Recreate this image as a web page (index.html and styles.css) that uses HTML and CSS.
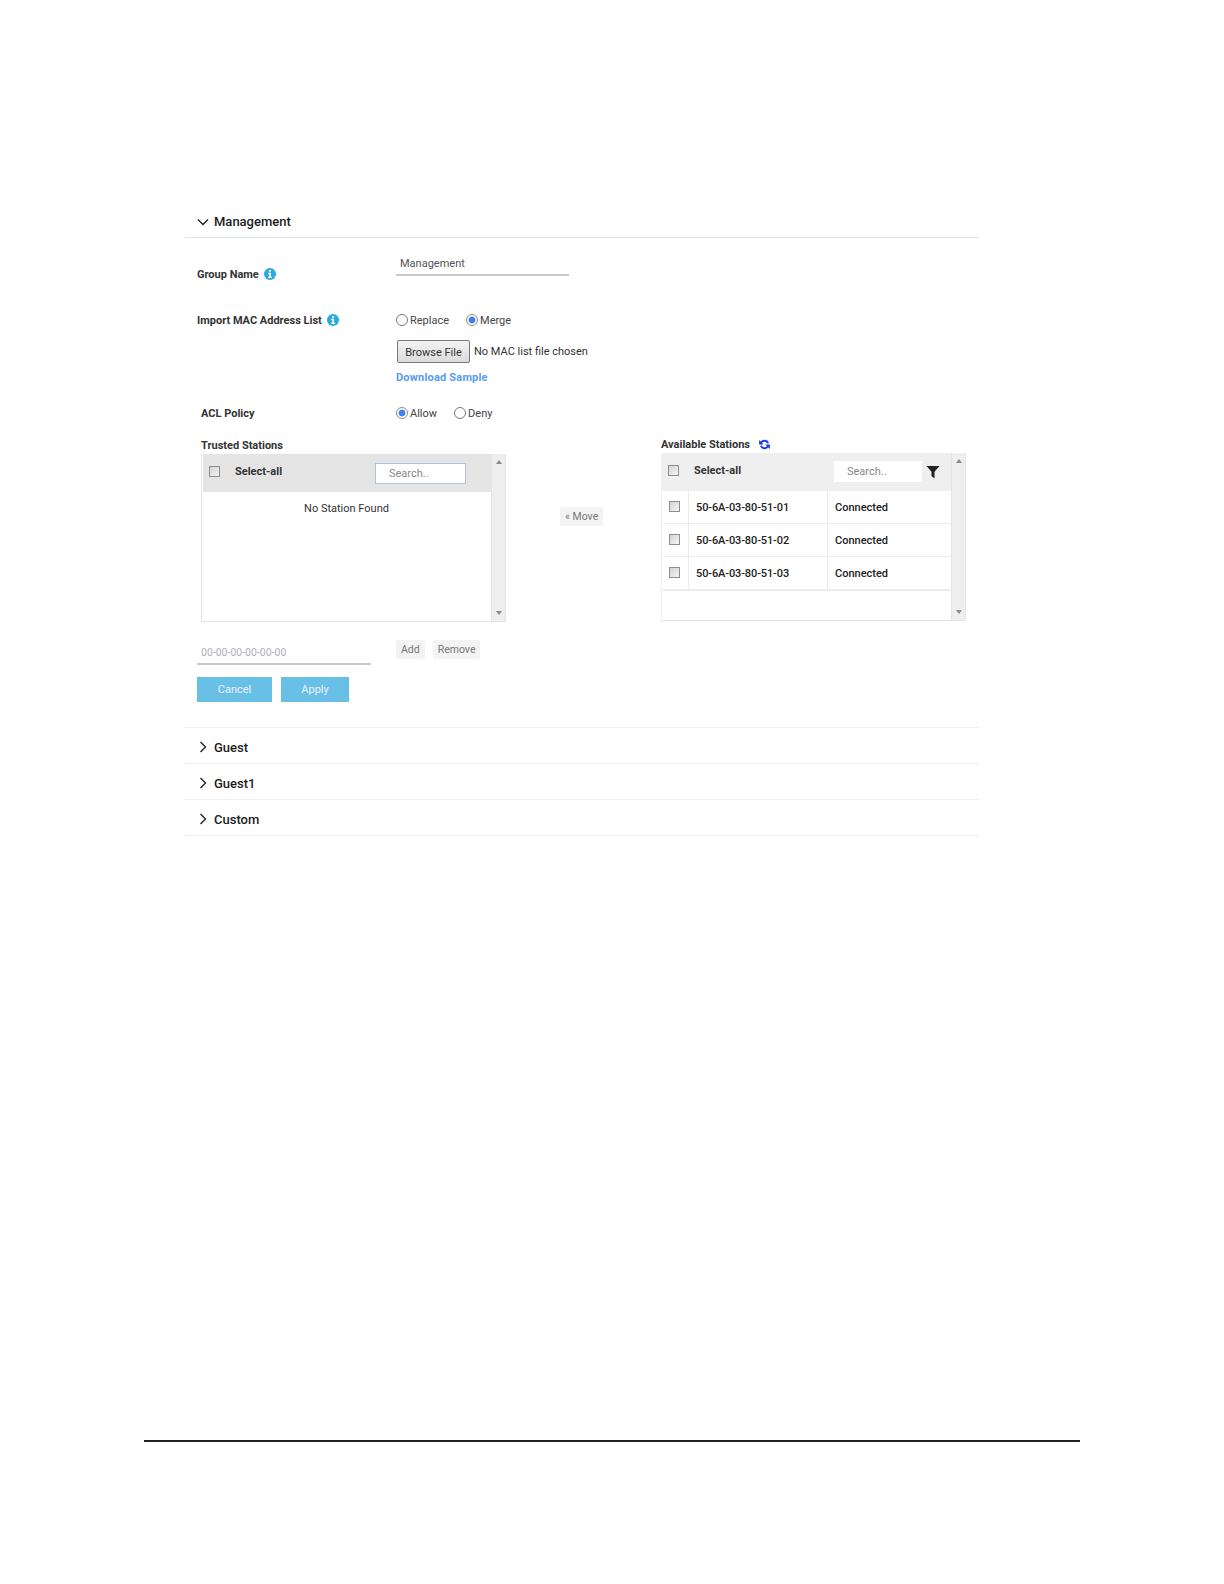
FILE: index.html
```html
<!DOCTYPE html>
<html lang="en">
<head>
<meta charset="utf-8">
<title>Management</title>
<link rel="stylesheet" href="styles.css">
</head>
<body>
<main class="page">
  <section class="accordion">
    <header class="acc-head acc-open">
      <svg class="chev" width="12" height="12" viewBox="0 0 12 12"><path d="M1 3.5 6 8.5 11 3.5" fill="none" stroke="#222" stroke-width="1.4"/></svg>
      <span>Management</span>
    </header>
    <div class="acc-body">
      <div class="row row-name">
        <div class="label">Group Name <svg class="info" width="12" height="12" viewBox="0 0 12 12"><circle cx="6" cy="6" r="6" fill="#29abe2"/><rect x="5" y="2" width="2" height="1.8" fill="#fff"/><path d="M4.2 4.8H7V8.8H8V10H4.2V8.8H5.2V6H4.2Z" fill="#fff"/></svg></div>
        <div class="text-field name-field">Management</div>
      </div>
      <div class="row row-import">
        <div class="label">Import MAC Address List <svg class="info" width="12" height="12" viewBox="0 0 12 12"><circle cx="6" cy="6" r="6" fill="#29abe2"/><rect x="5" y="2" width="2" height="1.8" fill="#fff"/><path d="M4.2 4.8H7V8.8H8V10H4.2V8.8H5.2V6H4.2Z" fill="#fff"/></svg></div>
        <div class="value-stack">
          <div class="radios">
            <span class="radio-item"><i class="radio"></i>Replace</span>
            <span class="radio-item"><i class="radio on"></i>Merge</span>
          </div>
          <div class="file-line">
            <button class="browse" type="button">Browse File</button>
            <span class="file-note">No MAC list file chosen</span>
          </div>
          <a class="sample">Download Sample</a>
        </div>
      </div>
      <div class="row row-acl">
        <div class="label label-acl">ACL Policy</div>
        <div class="radios radios-acl">
          <span class="radio-item"><i class="radio on"></i>Allow</span>
          <span class="radio-item"><i class="radio"></i>Deny</span>
        </div>
      </div>

      <div class="stations">
        <div class="panel">
          <div class="panel-title">Trusted Stations</div>
          <div class="box">
            <div class="box-main">
              <div class="box-head box-head-dark">
                <i class="check"></i>
                <span class="select-all">Select-all</span>
                <span class="search search-focus">Search..</span>
              </div>
              <div class="empty">No Station Found</div>
            </div>
            <div class="scroll"><i class="arrow up"></i><i class="arrow down"></i></div>
          </div>
        </div>
        <div class="move-col"><button class="ghost move" type="button">« Move</button></div>
        <div class="panel panel-right">
          <div class="panel-title">Available Stations
            <svg class="refresh" width="13" height="13" viewBox="0 0 24 24"><path d="M20.5 9.5A9 9 0 0 0 5 6.5L2 3.5V12H10.5L7.5 9A5.5 5.5 0 0 1 16.8 10.2ZM3.5 14.5A9 9 0 0 0 19 17.5L22 20.5V12H13.5L16.5 15A5.5 5.5 0 0 1 7.2 13.8Z" fill="#1a3fe0"/></svg>
          </div>
          <div class="box box-right">
            <div class="box-main">
              <div class="box-head box-head-light">
                <i class="check"></i>
                <span class="select-all">Select-all</span>
                <span class="search">Search..</span>
                <svg class="filter" width="14" height="14" viewBox="0 0 14 14"><path d="M0.5 1H13.5L8.5 6.8V13.5L5.5 11V6.8Z" fill="#222"/></svg>
              </div>
              <div class="st-row"><span class="st-check"><i class="check"></i></span><span class="st-mac">50-6A-03-80-51-01</span><span class="st-status">Connected</span></div>
              <div class="st-row"><span class="st-check"><i class="check"></i></span><span class="st-mac">50-6A-03-80-51-02</span><span class="st-status">Connected</span></div>
              <div class="st-row"><span class="st-check"><i class="check"></i></span><span class="st-mac">50-6A-03-80-51-03</span><span class="st-status">Connected</span></div>
            </div>
            <div class="scroll"><i class="arrow up"></i><i class="arrow down"></i></div>
          </div>
        </div>
      </div>

      <div class="row row-mac">
        <div class="text-field mac-field">00-00-00-00-00-00</div>
        <div class="mac-actions">
          <button class="ghost" type="button">Add</button>
          <button class="ghost" type="button">Remove</button>
        </div>
      </div>
      <div class="actions">
        <button class="primary cancel" type="button">Cancel</button>
        <button class="primary apply" type="button">Apply</button>
      </div>
    </div>
    <header class="acc-head acc-closed">
      <svg class="chev" width="12" height="12" viewBox="0 0 12 12"><path d="M3.5 1 8.5 6 3.5 11" fill="none" stroke="#222" stroke-width="1.4"/></svg>
      <span>Guest</span>
    </header>
    <header class="acc-head acc-closed">
      <svg class="chev" width="12" height="12" viewBox="0 0 12 12"><path d="M3.5 1 8.5 6 3.5 11" fill="none" stroke="#222" stroke-width="1.4"/></svg>
      <span>Guest1</span>
    </header>
    <header class="acc-head acc-closed">
      <svg class="chev" width="12" height="12" viewBox="0 0 12 12"><path d="M3.5 1 8.5 6 3.5 11" fill="none" stroke="#222" stroke-width="1.4"/></svg>
      <span>Custom</span>
    </header>
  </section>
  <hr class="page-rule">
</main>
</body>
</html>
```
FILE: styles.css
```css
* { box-sizing: border-box; }
html, body { margin: 0; padding: 0; background: #fff; }
body { font-family: Roboto, "Noto Sans", sans-serif; color: #2a2a2a; font-size: 11px; }
.page { width: 1224px; height: 1584px; padding: 208px 0 0 144px; display: flex; flex-direction: column; }
.accordion { width: 794px; margin-left: 41px; }
.acc-head { display: flex; align-items: center; gap: 5px; padding-left: 12px; font-size: 13px; font-weight: 500; color: #1c1c1c; }
.acc-open { height: 30px; border-bottom: 1px solid #dde3ea; padding-bottom: 2px; }
.acc-closed { height: 36px; border-bottom: 1px solid #efefef; padding-top: 3px; }
.acc-body { height: 490px; padding: 0 0 0 12px; border-bottom: 1px solid #efefef; }
.row { display: flex; }
.label { width: 199px; font-weight: 700; color: #333; display: flex; align-items: center; gap: 5px; height: 16px; }
.row-name { padding-top: 18px; height: 71px; }
.row-name .label { margin-top: 10px; }
.text-field { border-bottom: 2px solid #c9c9c9; color: #555; }
.name-field { width: 173px; height: 20px; padding: 0 4px; line-height: 16px; }
.row-import { height: 96px; padding-top: 3px; }
.value-stack { display: flex; flex-direction: column; }
.radios { display: flex; gap: 17px; height: 16px; align-items: center; }
.radio-item { display: flex; align-items: center; gap: 2px; color: #444; }
.radio { width: 12px; height: 12px; border: 1px solid #777; border-radius: 50%; background: #fff; display: block; position: relative; }
.radio.on { border-color: #8a8a8a; background: radial-gradient(circle, #3f80ea 0 3.2px, #fff 3.7px); }
.file-line { display: flex; align-items: center; gap: 4px; margin-top: 12px; height: 23px; padding-left: 1px; }
.browse { width: 73px; height: 23px; padding: 2px 0 0; background: linear-gradient(#f3f3f3, #dcdcdc); border: 1px solid #777; border-radius: 2px; font: 11px Roboto, sans-serif; color: #333; }
.file-note { color: #333; }
.sample { margin-top: 7px; color: #5a9bf0; font-weight: 700; line-height: 16px; letter-spacing: 0.2px; }
.row-acl { height: 32px; }
.label-acl { padding-left: 4px; }
.radios-acl { gap: 17px; }
.stations { display: grid; grid-template-columns: 305px 155px 305px; margin-left: 4px; height: 204px; }
.panel-title { height: 17px; font-weight: 700; color: #333; display: flex; align-items: center; gap: 8px; }
.panel-right { margin-top: -1px; }
.box { display: flex; height: 168px; border: 1px solid #e4e4e4; border-top: 0; }
.box-right { border-left: 1px solid #efefef; }
.box-main { flex: 1; min-width: 0; }
.box-head { display: flex; align-items: center; height: 38px; padding-left: 6px; }
.box-head-dark { background: #e4e4e4; margin-left: 1px; }
.box-head-light { background: #efefef; }
.box-head .check { margin-bottom: 3px; }
.check { display: block; width: 11px; height: 11px; background: linear-gradient(135deg, #d4d4d4, #f4f4f4); border: 1px solid #8e8e8e; }
.select-all { margin-left: 15px; padding-bottom: 3px; width: 140px; font-weight: 700; color: #333; }
.search { display: block; width: 88px; height: 21px; margin-top: -2px; background: #fff; padding-left: 13px; line-height: 21px; color: #888; }
.search-focus { width: 91px; border: 1px solid #a9c5df; line-height: 19px; margin-top: 1px; }
.filter { margin-left: 4px; }
.empty { text-align: center; padding-top: 7px; color: #333; line-height: 20px; }
.scroll { width: 14px; background: #eee; border-left: 1px solid #e4e4e4; display: flex; flex-direction: column; justify-content: space-between; align-items: center; padding: 6px 0; flex: none; }
.arrow { display: block; width: 0; height: 0; border-left: 3.5px solid transparent; border-right: 3.5px solid transparent; }
.arrow.up { border-bottom: 4px solid #888; }
.arrow.down { border-top: 4px solid #888; }
.st-row { display: grid; grid-template-columns: 26px 139px 1fr; height: 33px; border-bottom: 1px solid #ececec; margin-left: 1px; margin-right: 1px; align-items: center; color: #222; }
.st-row:nth-of-type(4) { border-bottom-width: 2px; height: 34px; }
.st-row > span { height: 100%; display: flex; align-items: center; }
.st-check { padding-left: 6px; padding-bottom: 2px; border-right: 1px solid #ececec; }
.st-mac { padding-left: 7px; border-right: 1px solid #ececec; font-weight: 500; letter-spacing: -0.1px; }
.st-status { padding-left: 7px; font-weight: 500; }
.move-col { display: flex; padding: 70px 0 0 54px; align-items: flex-start; }
.ghost { background: #f3f3f3; border: 0; border-radius: 2px; height: 19px; padding: 0 5px; font: 10.5px Roboto, sans-serif; color: #777; white-space: nowrap; }
.row-mac { height: 36px; align-items: flex-start; }
.mac-field { width: 174px; height: 24px; padding: 4px 4px 0; line-height: 15px; color: #b0b0b8; font-size: 10.5px; }
.mac-actions { display: flex; gap: 8px; margin-left: 25px; margin-top: -1px; }
.actions { display: flex; gap: 9px; }
.primary { height: 25px; background: #69c0e6; border: 0; color: #eef; font: 11px Roboto, sans-serif; }
.cancel { width: 75px; }
.apply { width: 68px; }
.page-rule { width: 936px; height: 2px; margin: 604px 0 0; border: 0; background: #222; }
```
